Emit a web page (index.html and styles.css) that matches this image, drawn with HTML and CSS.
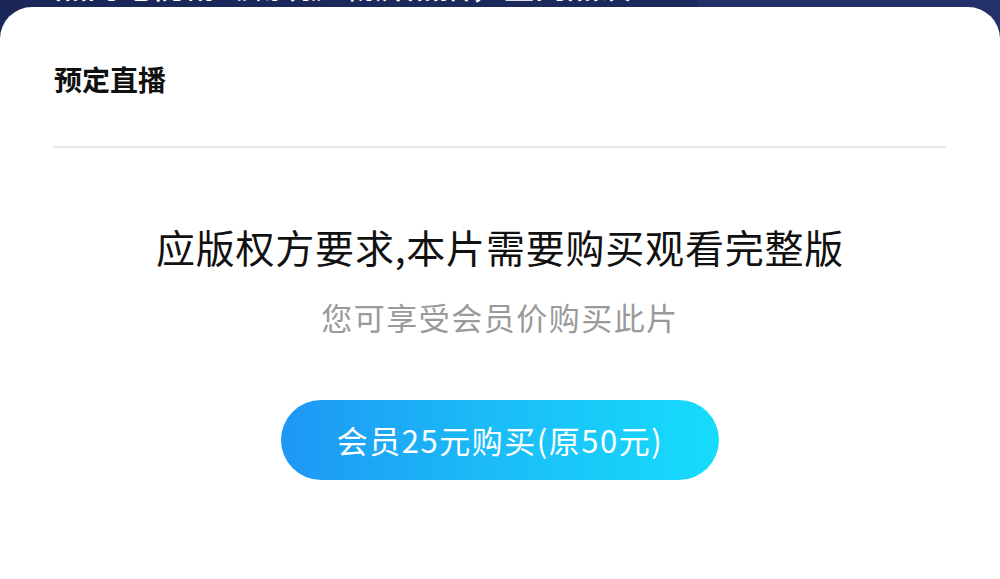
FILE: index.html
```html
<!DOCTYPE html>
<html lang="zh">
<head>
<meta charset="utf-8">
<link rel="stylesheet" href="styles.css">
</head>
<body>
<div class="page">
  <div class="backdrop">
    <div class="backdrop-text">热门电视剧《琉璃》霸屏热播，全网热议</div>
  </div>
  <div class="sheet">
    <div class="sheet-title">预定直播</div>
    <div class="divider"></div>
    <div class="notice">
      <div class="notice-title">应版权方要求,本片需要购买观看完整版</div>
      <div class="notice-sub">您可享受会员价购买此片</div>
      <button class="buy-btn">会员25元购买(原50元)</button>
    </div>
  </div>
</div>
</body>
</html>
```
FILE: styles.css
```css
html, body {
  margin: 0;
  padding: 0;
}
body {
  width: 1000px;
  height: 579px;
  overflow: hidden;
  font-family: "Noto Sans CJK SC", "Noto Sans", sans-serif;
  background: linear-gradient(90deg, #1b2759 0, #1c295c 695px, #23306a 700px, #23306a 100%);
}
.page {
  display: flex;
  flex-direction: column;
  height: 579px;
}
.backdrop {
  height: 7px;
  overflow: hidden;
  flex: none;
}
.backdrop-text {
  margin-top: -39px;
  padding-left: 55px;
  font-size: 32px;
  line-height: 46px;
  color: #ffffff;
  font-weight: 500;
  white-space: nowrap;
}
.sheet {
  flex: 1;
  background: #ffffff;
  border-radius: 32px 32px 0 0;
  display: flex;
  flex-direction: column;
}
.sheet-title {
  padding: 54px 0 0 54px;
  font-size: 28px;
  line-height: 36px;
  font-weight: 700;
  color: #111111;
}
.divider {
  margin: 49px 54px 0 53px;
  height: 2px;
  background: #e9e9e9;
}
.notice {
  display: flex;
  flex-direction: column;
  align-items: center;
}
.notice-title {
  margin-top: 73px;
  font-size: 39px;
  line-height: 50px;
  color: #111111;
  letter-spacing: 0.8px;
}
.notice-sub {
  margin-top: 26px;
  font-size: 31px;
  line-height: 40px;
  color: #9a9a9a;
  letter-spacing: 1.5px;
}
.buy-btn {
  margin-top: 63px;
  width: 438px;
  height: 80px;
  border: none;
  border-radius: 40px;
  background: linear-gradient(90deg, #1f97f4 0%, #1bbdf7 50%, #16dcfc 100%);
  color: #ffffff;
  font-family: "Noto Sans CJK SC", "Noto Sans", sans-serif;
  font-size: 31px;
  line-height: 80px;
  letter-spacing: 1.5px;
  padding: 0;
}
```
